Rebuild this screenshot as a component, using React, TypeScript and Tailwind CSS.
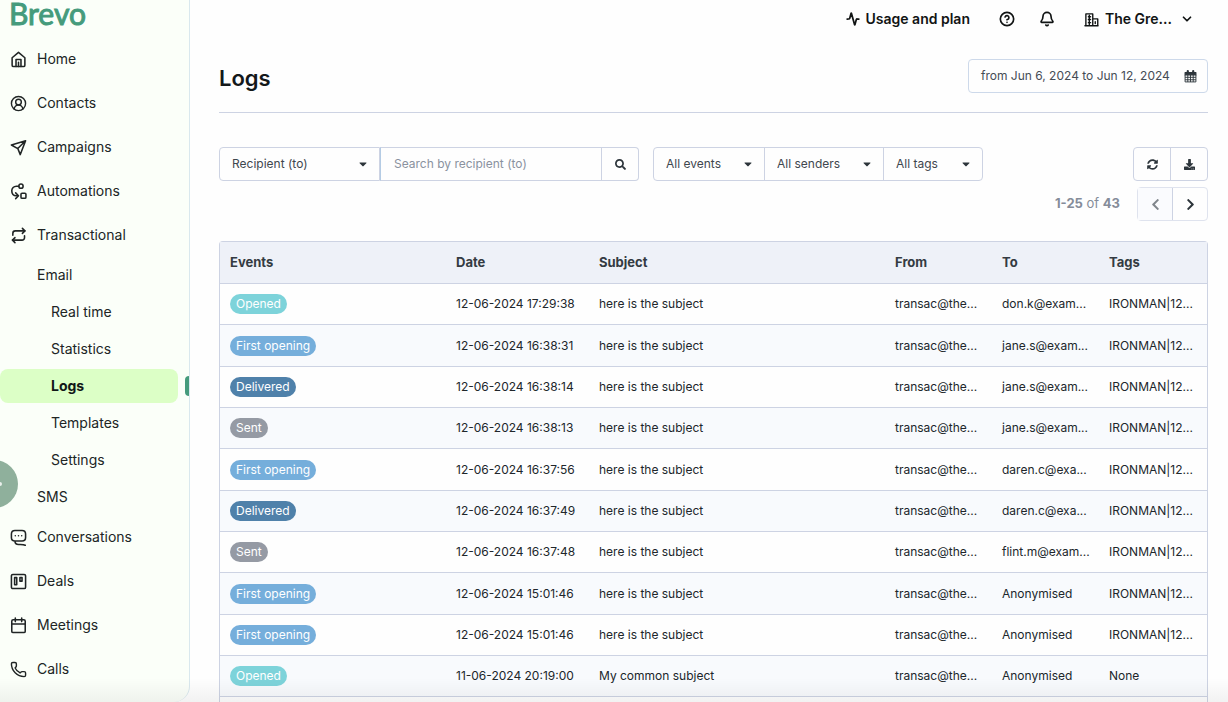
import React from 'react';
import { Activity, Bell, ChevronDown, CircleHelp, CircleUserRound, Phone } from 'lucide-react';
import { FaCaretDown, FaChevronLeft, FaChevronRight, FaDownload, FaSearch, FaSyncAlt } from 'react-icons/fa';

type IconProps = { className?: string };

function Stroke({ className, children }: { className?: string; children: React.ReactNode }) {
    return (
        <svg viewBox="0 0 24 24" fill="none" stroke="currentColor" strokeWidth={2.2} strokeLinecap="round" strokeLinejoin="round" className={className} aria-hidden="true">
            {children}
        </svg>
    );
}

function HomeIcon({ className }: IconProps) {
    return (
        <Stroke className={className}>
            <path d="M3 9.5 12 2l9 7.5V20a2 2 0 0 1-2 2H5a2 2 0 0 1-2-2Z" />
            <path d="M8.500 22V12h7v10M12 16v6" />
        </Stroke>
    );
}

function PlaneIcon({ className }: IconProps) {
    return (
        <Stroke className={className}>
            <path d="M22 2.500 2 8.500l9 5L14.500 22 22 2.500ZM11 13.500l11-11" />
        </Stroke>
    );
}

function AutomationIcon({ className }: IconProps) {
    return (
        <Stroke className={className}>
            <circle cx="15.500" cy="4.500" r="3" />
            <path d="M12.500 4.500H9a6.500 6.500 0 0 0-6.500 6.500c0 4 2.500 7 6.500 7h2" />
            <path d="m8 14 4 4-4 4" />
            <rect x="15.500" y="14.500" width="7" height="7" rx="1.500" />
        </Stroke>
    );
}

function TransactionalIcon({ className }: IconProps) {
    return (
        <Stroke className={className}>
            <path d="m17.500 2 3.500 3.500L17.500 9" />
            <path d="M4 11.500V9a3.500 3.500 0 0 1 3.500-3.500H21" />
            <path d="M7 22l-3.500-3.500L7 15" />
            <path d="M20.500 12.500V15a3.500 3.500 0 0 1-3.500 3.500H3.500" />
        </Stroke>
    );
}

function ChatIcon({ className }: IconProps) {
    return (
        <Stroke className={className}>
            <path d="M21.500 23c-2-1-4-1-7-1H12c-3.500 0-5-2-5-5-3 0-5-1.500-5-4.500V7c0-3 2-5 5-5h10c3 0 5 2 5 5v5c0 3-2 5-5 5H7" />
            <path d="M7.500 9.500h.01M12 9.500h.01M16.500 9.500h.01" />
        </Stroke>
    );
}

function DealsIcon({ className }: IconProps) {
    return (
        <Stroke className={className}>
            <rect x="2" y="2" width="20" height="20" rx="2" />
            <rect x="6.500" y="6.500" width="3" height="10" />
            <rect x="14" y="6.500" width="3" height="5" />
        </Stroke>
    );
}

function MeetingIcon({ className }: IconProps) {
    return (
        <Stroke className={className}>
            <rect x="2.500" y="4" width="19" height="18" rx="2" />
            <path d="M2.500 10h19M7.500 1.500v5M16.500 1.500v5" />
        </Stroke>
    );
}

function BuildingIcon({ className }: IconProps) {
    return (
        <Stroke className={className}>
            <path d="M14 22V3H3v19h19V11h-8M1.500 22h21" />
            <path d="M7 7.500h3.500M7 12h3.500M7 17h3.500M8.500 5v15M18 15.500v3" />
        </Stroke>
    );
}

function CalendarGridIcon({ className }: IconProps) {
    return (
        <svg viewBox="0 0 24 24" fill="none" stroke="currentColor" className={className} aria-hidden="true">
            <path d="M2 4.500h20V9H2z" fill="currentColor" strokeWidth={2} strokeLinejoin="round" />
            <path d="M7 2v3M17 2v3" strokeWidth={4} strokeLinecap="round" />
            <path d="M2 9v13h20V9M2 13.500h20M2 18h20M7 9v13M12 9v13M17 9v13" strokeWidth={1.7} strokeLinejoin="round" />
        </svg>
    );
}

const topItems = [
    { label: 'Home', Icon: HomeIcon },
    { label: 'Contacts', Icon: CircleUserRound },
    { label: 'Campaigns', Icon: PlaneIcon },
    { label: 'Automations', Icon: AutomationIcon },
    { label: 'Transactional', Icon: TransactionalIcon },
];

const bottomItems = [
    { label: 'Conversations', Icon: ChatIcon },
    { label: 'Deals', Icon: DealsIcon },
    { label: 'Meetings', Icon: MeetingIcon },
    { label: 'Calls', Icon: Phone },
];

const emailItems = ['Real time', 'Statistics', 'Logs', 'Templates', 'Settings'];

const statusColors: Record<string, string> = {
    Opened: 'bg-[#7dd3da]',
    'First opening': 'bg-[#75aedb]',
    Delivered: 'bg-[#4f81aa]',
    Sent: 'bg-[#959aa4]',
};

const rows = [
    ['Opened', '12-06-2024 17:29:38', 'here is the subject', 'don.k@exam...', 'IRONMAN|12...'],
    ['First opening', '12-06-2024 16:38:31', 'here is the subject', 'jane.s@exam...', 'IRONMAN|12...'],
    ['Delivered', '12-06-2024 16:38:14', 'here is the subject', 'jane.s@exam...', 'IRONMAN|12...'],
    ['Sent', '12-06-2024 16:38:13', 'here is the subject', 'jane.s@exam...', 'IRONMAN|12...'],
    ['First opening', '12-06-2024 16:37:56', 'here is the subject', 'daren.c@exa...', 'IRONMAN|12...'],
    ['Delivered', '12-06-2024 16:37:49', 'here is the subject', 'daren.c@exa...', 'IRONMAN|12...'],
    ['Sent', '12-06-2024 16:37:48', 'here is the subject', 'flint.m@exam...', 'IRONMAN|12...'],
    ['First opening', '12-06-2024 15:01:46', 'here is the subject', 'Anonymised', 'IRONMAN|12...'],
    ['First opening', '12-06-2024 15:01:46', 'here is the subject', 'Anonymised', 'IRONMAN|12...'],
    ['Opened', '11-06-2024 20:19:00', 'My common subject', 'Anonymised', 'None'],
];

function NavLink({ label, Icon }: { label: string; Icon: React.ComponentType<IconProps> }) {
    return (
        <li>
            <a href="#" className="flex h-11 items-center gap-2.5 pl-2.5">
                <Icon className="size-[17px]" />
                {label}
            </a>
        </li>
    );
}

function Sidebar() {
    return (
        <aside className="relative w-[190px] shrink-0 overflow-hidden rounded-br-2xl border-r border-[#d9e8ee] bg-[#fbfff9]">
            <a href="#" className="flex h-[37px] items-start pl-[9px] font-[Lato] text-[30px] leading-[27px] text-[#459b7c] [-webkit-text-stroke:1px_#459b7c]">Brevo</a>
            <nav className="text-sm text-[#202525]">
                <ul>
                    {topItems.map(item => <NavLink key={item.label} {...item} />)}
                </ul>
                <ul>
                    <li><a href="#" className="flex h-9 items-center pl-[37px]">Email</a></li>
                    {emailItems.map(item => item === 'Logs' ? (
                        <li key={item} className="flex h-[37px] items-center justify-between">
                            <a href="#" aria-current="page" className="flex h-[34px] w-[178px] items-center rounded-lg bg-[#dcffc6] pl-[51px] font-bold text-[#111818]">Logs</a>
                            <span className="h-5 w-1 rounded-l-sm bg-[#459b7c]" />
                        </li>
                    ) : (
                        <li key={item}><a href="#" className="flex h-[37px] items-center pl-[51px]">{item}</a></li>
                    ))}
                    <li><a href="#" className="flex h-[37px] items-center pl-[37px]">SMS</a></li>
                </ul>
                <ul>
                    {bottomItems.map(item => <NavLink key={item.label} {...item} />)}
                </ul>
            </nav>
            {/* Help bubble, tucked into the left edge */}
            <button aria-label="Help" className="absolute top-[460px] -left-[30px] flex size-12 items-center justify-end rounded-full bg-[#8fb09c] pr-4">
                <span className="size-1 rounded-full bg-white/80" />
            </button>
        </aside>
    );
}

function TopBar() {
    return (
        <header className="flex h-[38px] items-center justify-end pr-3.5 text-sm font-semibold text-[#111414]">
            <a href="#" className="mr-[29px] flex items-center gap-1.5">
                <Activity className="size-[14px]" strokeWidth={3} />
                Usage and plan
            </a>
            <button aria-label="Help center" className="mr-6"><CircleHelp className="size-4" strokeWidth={2.5} /></button>
            <button aria-label="Notifications" className="mr-[29px]"><Bell className="size-4" strokeWidth={2.5} /></button>
            <button className="flex items-center">
                <BuildingIcon className="mr-1.5 size-[15px]" />
                <span>The Gre...</span>
                <ChevronDown className="ml-2 size-[14px]" strokeWidth={3} />
            </button>
        </header>
    );
}

function Filter({ label, className }: { label: string; className: string }) {
    return (
        <div className={`relative ${className}`}>
            <select aria-label={label} className="h-full w-full appearance-none pl-3 text-[#3f474e]">
                <option>{label}</option>
            </select>
            <FaCaretDown className="pointer-events-none absolute top-2.5 right-2.5 size-3 text-[#2d353b]" />
        </div>
    );
}

function Toolbar() {
    return (
        <section className="text-[#2d353b]">
            <div className="flex h-[34px] text-xs">
                <Filter label="Recipient (to)" className="w-[161px] rounded-l-sm border border-[#cdd3e3]" />
                <input type="text" aria-label="Search by recipient (to)" placeholder="Search by recipient (to)" className="w-[222px] border border-l-[#b4cbe4] border-[#cdd3e3] px-[13px] placeholder:text-[#8a929e]" />
                <button aria-label="Search" className="flex w-[37px] items-center justify-center rounded-r-sm border border-l-0 border-[#cdd3e3]">
                    <FaSearch className="size-[11px]" />
                </button>
                <div className="ml-3.5 flex divide-x divide-[#cdd3e3] rounded-sm border border-[#cdd3e3]">
                    <Filter label="All events" className="w-[111px]" />
                    <Filter label="All senders" className="w-[119px]" />
                    <Filter label="All tags" className="w-[98px]" />
                </div>
                <div className="ml-auto flex divide-x divide-[#cdd3e3] rounded-sm border border-[#cdd3e3]">
                    <button aria-label="Refresh" className="flex w-[37px] items-center justify-center"><FaSyncAlt className="size-[11px]" /></button>
                    <button aria-label="Download" className="flex w-9 items-center justify-center"><FaDownload className="size-[11px]" /></button>
                </div>
            </div>
            <div className="mt-1.5 flex h-[34px] items-center justify-end">
                <p className="mr-[17px] text-[#858c99]"><b>1-25</b> of <b>43</b></p>
                <div className="flex h-full divide-x divide-[#cdd3e3] rounded-sm border border-[#dfe3ee]">
                    <button aria-label="Previous page" disabled className="flex w-[35px] items-center justify-center bg-[#fafbfe] text-[#80868c]"><FaChevronLeft className="size-[13px]" /></button>
                    <button aria-label="Next page" className="flex w-[34px] items-center justify-center"><FaChevronRight className="size-[13px]" /></button>
                </div>
            </div>
        </section>
    );
}

function LogsTable() {
    return (
        <table className="mt-5 w-full table-fixed border-separate border-spacing-0 rounded-t-sm border border-b-0 border-[#cdd3e3] text-left text-xs text-[#20262b]">
            <thead>
                <tr className="h-[42px] bg-[#eef1f8] text-[13px] text-[#343b42] [&>th]:border-b [&>th]:border-[#cdd3e3] [&>th]:pl-2.5">
                    <th className="w-[226px]">Events</th>
                    <th className="w-[143px]">Date</th>
                    <th>Subject</th>
                    <th className="w-[107px]">From</th>
                    <th className="w-[107px]">To</th>
                    <th className="w-[108px]">Tags</th>
                </tr>
            </thead>
            <tbody>
                {rows.map(([status, date, subject, to, tags], i) => (
                    <tr key={i} className="h-[41px] even:bg-[#f8fafd] nth-[3n+2]:h-[42px] [&>td]:border-b [&>td]:border-[#cdd3e3] [&>td]:pl-2.5 [&>td]:whitespace-nowrap">
                        <td><span className={`inline-flex h-5 items-center rounded-full px-1.5 text-white ${statusColors[status]}`}>{status}</span></td>
                        <td>{date}</td>
                        <td>{subject}</td>
                        <td>transac@the...</td>
                        <td>{to}</td>
                        <td>{tags}</td>
                    </tr>
                ))}
                <tr className="h-[41px]"><td colSpan={6} /></tr>
            </tbody>
        </table>
    );
}

export default function App() {
    return (
        <div className="relative flex h-screen overflow-hidden bg-[#fefefe] font-[Inter,sans-serif]">
            <Sidebar />
            <main className="min-w-0 flex-1 pr-5 pl-[29px] text-[13px]">
                <TopBar />
                <div className="mt-[21px] mb-[34px] flex items-center justify-between border-b border-[#cdd3e3] pb-[19px]">
                    <h1 className="pt-1 text-[22px] leading-[30px] font-semibold text-[#14181a]">Logs</h1>
                    <button className="flex h-[34px] w-60 items-center justify-between rounded-sm border border-[#cdd9ea] pr-2.5 pl-3 text-xs text-[#454c55]">
                        from Jun 6, 2024 to Jun 12, 2024
                        <CalendarGridIcon className="size-[13px] text-[#2d353b]" />
                    </button>
                </div>
                <Toolbar />
                <LogsTable />
            </main>
            {/* Soft shade along the bottom edge */}
            <div className="pointer-events-none absolute inset-x-0 bottom-0 h-6 bg-linear-to-b from-transparent to-black/5" />
        </div>
    );
}
